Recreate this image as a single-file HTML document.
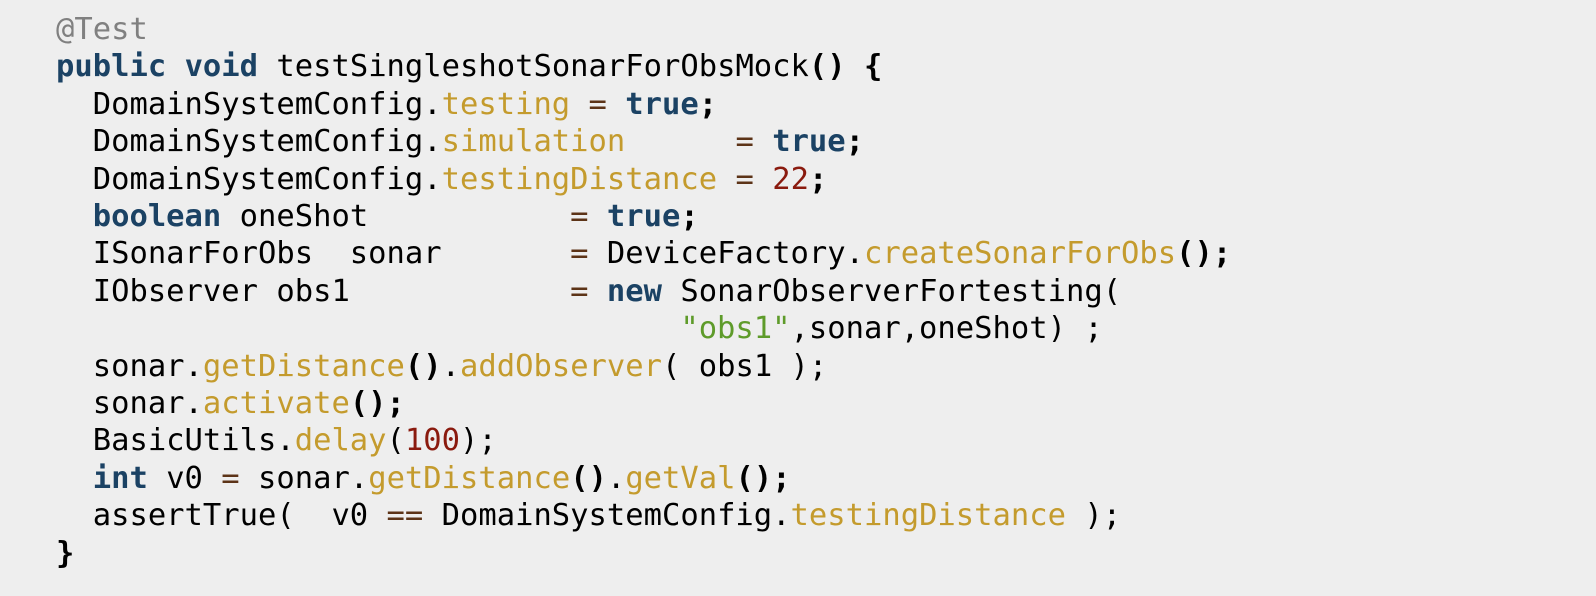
<!DOCTYPE html>
<html><head><style>
html,body{margin:0;padding:0;background:#eeeeee;width:1596px;height:596px;overflow:hidden}
pre{margin:0;position:absolute;left:56px;top:11px;font-family:"DejaVu Sans Mono","Liberation Mono",monospace;font-size:30.5px;line-height:37.4px;color:#000}
.a{color:#808080}.k{color:#1b4264;font-weight:bold}.f{color:#c49b2d}.n{color:#8a1a0e}.s{color:#5e9b2a}b{font-weight:bold}.o{color:#5c3317}
</style></head><body><pre><span class="a">@Test</span>
<span class="k">public</span> <span class="k">void</span> testSingleshotSonarForObsMock<b>()</b> <b>{</b>
  DomainSystemConfig.<span class="f">testing</span> <span class="o">=</span> <span class="k">true</span><b>;</b>
  DomainSystemConfig.<span class="f">simulation</span>      <span class="o">=</span> <span class="k">true</span><b>;</b>
  DomainSystemConfig.<span class="f">testingDistance</span> <span class="o">=</span> <span class="n">22</span><b>;</b>
  <span class="k">boolean</span> oneShot           <span class="o">=</span> <span class="k">true</span><b>;</b>
  ISonarForObs  sonar       <span class="o">=</span> DeviceFactory.<span class="f">createSonarForObs</span><b>();</b>
  IObserver obs1            <span class="o">=</span> <span class="k">new</span> SonarObserverFortesting(
                                  <span class="s">"obs1"</span>,sonar,oneShot) ;
  sonar.<span class="f">getDistance</span><b>()</b>.<span class="f">addObserver</span>( obs1 );
  sonar.<span class="f">activate</span><b>();</b>
  BasicUtils.<span class="f">delay</span>(<span class="n">100</span>);
  <span class="k">int</span> v0 <span class="o">=</span> sonar.<span class="f">getDistance</span><b>()</b>.<span class="f">getVal</span><b>();</b>
  assertTrue(  v0 <span class="o">==</span> DomainSystemConfig.<span class="f">testingDistance</span> );
<b>}</b></pre></body></html>
